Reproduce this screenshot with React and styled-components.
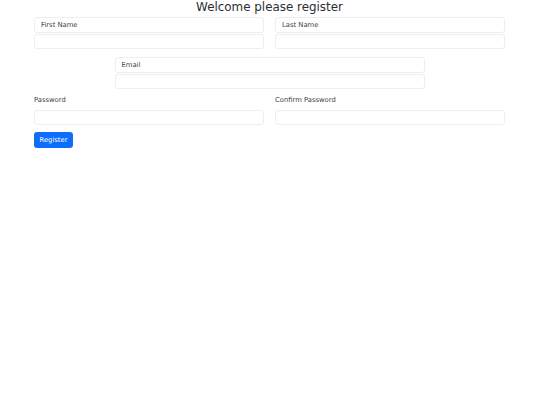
import React from 'react';
import styled, { createGlobalStyle } from 'styled-components';

const GlobalStyle = createGlobalStyle`
  body {
    margin: 0;
    background: #fff;
    font-family: "DejaVu Sans", "Liberation Sans", sans-serif;
    color: #212529;
  }
`;

const Page = styled.div`
  padding: 0 35px 0 34px;
`;

const Title = styled.h3`
  margin: 0;
  text-align: center;
  font-size: 11.9px;
  font-weight: 400;
  line-height: 14px;
  color: #2b2f33;
`;

const Row = styled.div`
  display: flex;
  gap: 11px;
  margin-top: ${p => p.top || 0}px;
`;

const Col = styled.div`
  flex: 1;
  display: flex;
  flex-direction: column;
`;

const Center = styled.div`
  width: 310px;
  margin: 8px auto 0;
  display: flex;
  flex-direction: column;
`;

const BoxLabel = styled.div`
  height: 16px;
  box-sizing: border-box;
  border: 1px solid #eceef0;
  border-radius: 3px;
  padding: 0 6px;
  font-size: 6.8px;
  line-height: 14px;
  color: #3a3f44;
`;

const Input = styled.input`
  height: 15px;
  box-sizing: border-box;
  margin: 1px 0 0;
  border: 1px solid #eceef0;
  border-radius: 3px;
  padding: 0 6px;
  font-size: 8px;
  outline: none;
  background: #fff;
`;

const PlainLabel = styled.label`
  font-size: 6.8px;
  line-height: 9px;
  color: #3a3f44;
  margin-bottom: 4px;
`;

const Button = styled.button`
  margin-top: 7px;
  width: 39px;
  height: 16px;
  padding: 0;
  border: none;
  border-radius: 3px;
  background: #0d6efd;
  color: #fff;
  font-family: inherit;
  font-size: 6.8px;
`;

export default function App() {
  return (
    <Page>
      <GlobalStyle />
      <Title>Welcome please register</Title>
      <Row top={3}>
        <Col>
          <BoxLabel>First Name</BoxLabel>
          <Input />
        </Col>
        <Col>
          <BoxLabel>Last Name</BoxLabel>
          <Input />
        </Col>
      </Row>
      <Center>
        <BoxLabel>Email</BoxLabel>
        <Input />
      </Center>
      <Row top={7}>
        <Col>
          <PlainLabel>Password</PlainLabel>
          <Input />
        </Col>
        <Col>
          <PlainLabel>Confirm Password</PlainLabel>
          <Input />
        </Col>
      </Row>
      <Button>Register</Button>
    </Page>
  );
}
